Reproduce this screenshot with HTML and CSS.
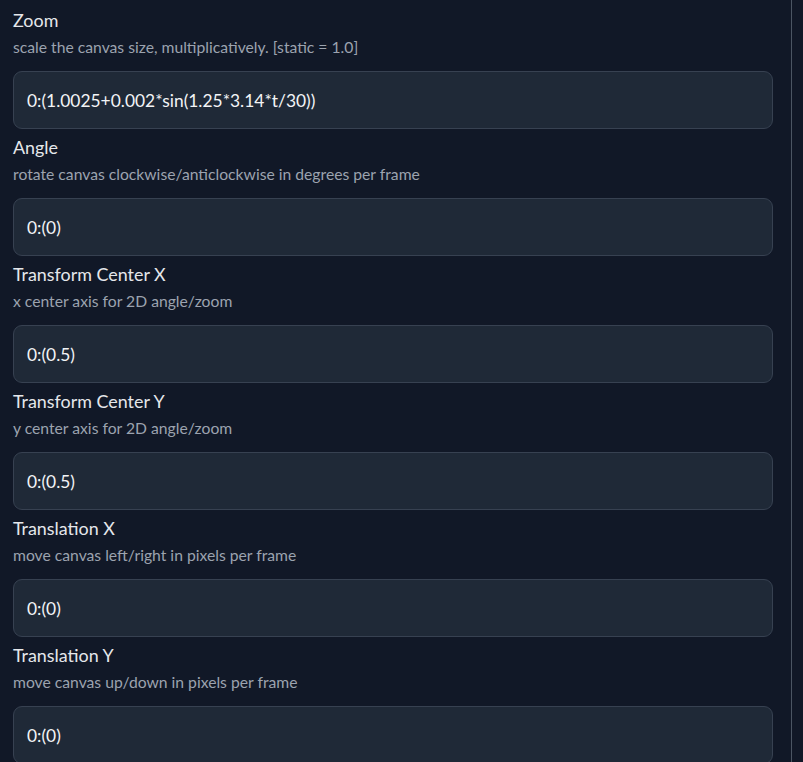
FILE: index.html
```html
<!DOCTYPE html>
<html>
<head>
<meta charset="utf-8">
<link rel="stylesheet" href="styles.css">
</head>
<body>
<div class="panel">
  <div class="field">
    <div class="label">Zoom</div>
    <div class="info">scale the canvas size, multiplicatively. [static = 1.0]</div>
    <div class="input">0:(1.0025+0.002*sin(1.25*3.14*t/30))</div>
  </div>
  <div class="field">
    <div class="label">Angle</div>
    <div class="info">rotate canvas clockwise/anticlockwise in degrees per frame</div>
    <div class="input">0:(0)</div>
  </div>
  <div class="field">
    <div class="label">Transform Center X</div>
    <div class="info">x center axis for 2D angle/zoom</div>
    <div class="input">0:(0.5)</div>
  </div>
  <div class="field">
    <div class="label">Transform Center Y</div>
    <div class="info">y center axis for 2D angle/zoom</div>
    <div class="input">0:(0.5)</div>
  </div>
  <div class="field">
    <div class="label">Translation X</div>
    <div class="info">move canvas left/right in pixels per frame</div>
    <div class="input">0:(0)</div>
  </div>
  <div class="field">
    <div class="label">Translation Y</div>
    <div class="info">move canvas up/down in pixels per frame</div>
    <div class="input">0:(0)</div>
  </div>
</div>
</body>
</html>
```
FILE: styles.css
```css
html, body {
  margin: 0;
  padding: 0;
  background: #111827;
  height: 100%;
  overflow: hidden;
}
.panel {
  width: 760px;
  min-height: 100%;
  box-sizing: content-box;
  padding: 8px 18px 0 13px;
  border-right: 1px solid #4b5563;
  display: flex;
  flex-direction: column;
  gap: 6px;
  font-family: "Lato", "Noto Sans", sans-serif;
}
.field {
  display: flex;
  flex-direction: column;
}
.label {
  font-size: 17.9px;
  line-height: 24px;
  height: 24px;
  color: #e5e7eb;
}
.info {
  margin-top: 5px;
  font-size: 15.7px;
  line-height: 20px;
  height: 20px;
  color: #9ca3af;
}
.input {
  margin-top: 14px;
  height: 58px;
  box-sizing: border-box;
  border: 1px solid #374151;
  border-radius: 9px;
  background: #1f2937;
  padding: 0 13px;
  display: flex;
  align-items: center;
  font-size: 17.4px;
  color: #f3f4f6;
}
```
